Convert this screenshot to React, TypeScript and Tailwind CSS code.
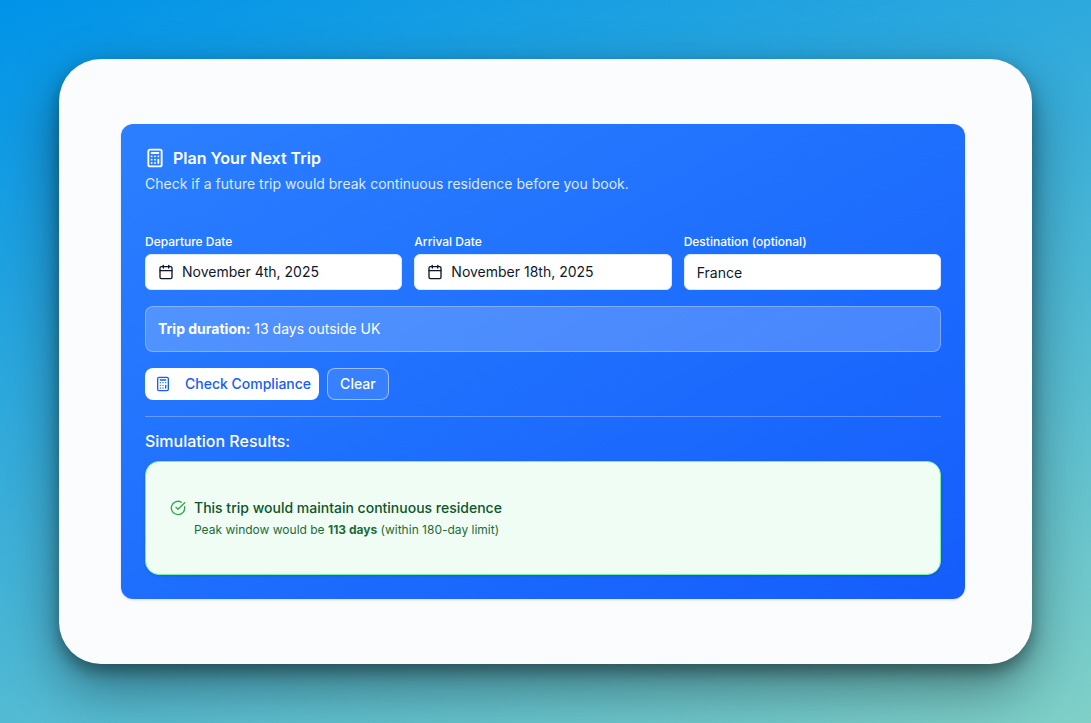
import { useState } from 'react';
import { Calculator, Calendar, CircleCheckBig } from 'lucide-react';

type DateFieldProps = {
  id: string;
  label: string;
  value: string;
};

function DateField({ id, label, value }: DateFieldProps) {
  return (
    <div className="space-y-1">
      <label htmlFor={id} className="block text-xs font-medium text-white">
        {label}
      </label>
      <button
        id={id}
        type="button"
        className="flex h-9 w-full items-center gap-2 rounded-md border border-blue-100 bg-white px-3 text-left text-sm text-slate-900"
      >
        <Calendar className="size-4 shrink-0" />
        {value}
      </button>
    </div>
  );
}

export default function App() {
  const [destination, setDestination] = useState('France');
  const [showResults, setShowResults] = useState(true);

  return (
    <div className="min-h-screen bg-[linear-gradient(160deg,#0093E9_0%,#80D0C7_100%)] p-[59px] font-['Inter',sans-serif]">
      <main className="rounded-[42px] bg-[#fbfcfe] py-[65px] pr-[67px] pl-[62px] shadow-[0_24px_56px_rgba(0,0,0,0.4),0_8px_16px_rgba(0,0,0,0.35)]">
        <section className="rounded-xl bg-linear-to-br from-[#2b7fff] to-[#155dfc] p-6 text-white shadow-sm">
          <header className="mb-10 space-y-1.5">
            <h1 className="flex items-center gap-2 text-base/5 font-semibold">
              <Calculator className="size-5" strokeWidth={2.25} />
              Plan Your Next Trip
            </h1>
            <p className="text-sm text-blue-100">
              Check if a future trip would break continuous residence before you book.
            </p>
          </header>

          <form className="space-y-4" onSubmit={(e) => e.preventDefault()}>
            <div className="grid grid-cols-3 gap-3">
              <DateField id="departure" label="Departure Date" value="November 4th, 2025" />
              <DateField id="arrival" label="Arrival Date" value="November 18th, 2025" />
              <div className="space-y-1">
                <label htmlFor="destination" className="block text-xs font-medium text-white">
                  Destination (optional)
                </label>
                <input
                  id="destination"
                  value={destination}
                  onChange={(e) => setDestination(e.target.value)}
                  className="h-9 w-full rounded-md border border-blue-100 bg-white px-3 text-sm text-slate-900"
                />
              </div>
            </div>

            {/* Duration */}
            <p className="rounded-lg border border-white/30 bg-white/20 p-3 text-sm">
              <strong className="font-bold">Trip duration:</strong> 13 days outside UK
            </p>

            <div className="flex gap-2">
              <button
                type="submit"
                onClick={() => setShowResults(true)}
                className="flex h-8 items-center gap-3.5 rounded-lg bg-white pr-2 pl-2.5 text-sm font-medium text-[#155dfc]"
              >
                <Calculator className="size-4" />
                Check Compliance
              </button>
              <button
                type="button"
                onClick={() => setShowResults(false)}
                className="h-8 rounded-lg border border-white/50 bg-white/10 px-3 text-sm font-medium"
              >
                Clear
              </button>
            </div>
          </form>

          {/* Results */}
          {showResults && (
            <div className="mt-4 space-y-2 border-t border-white/30 pt-3">
              <h2 className="text-base font-medium">Simulation Results:</h2>
              <div className="rounded-[14px] border border-[#7bf1a8] bg-green-50 px-6 py-9 shadow-sm">
                <div className="flex gap-2">
                  <CircleCheckBig className="mt-0.5 size-4 shrink-0 text-[#2fa84a]" />
                  <div className="space-y-1">
                    <p className="text-sm font-medium text-[#0d542b]">
                      This trip would maintain continuous residence
                    </p>
                    <p className="text-xs text-[#1c6b3a]">
                      Peak window would be <strong>113 days</strong> (within 180-day limit)
                    </p>
                  </div>
                </div>
              </div>
            </div>
          )}
        </section>
      </main>
    </div>
  );
}
